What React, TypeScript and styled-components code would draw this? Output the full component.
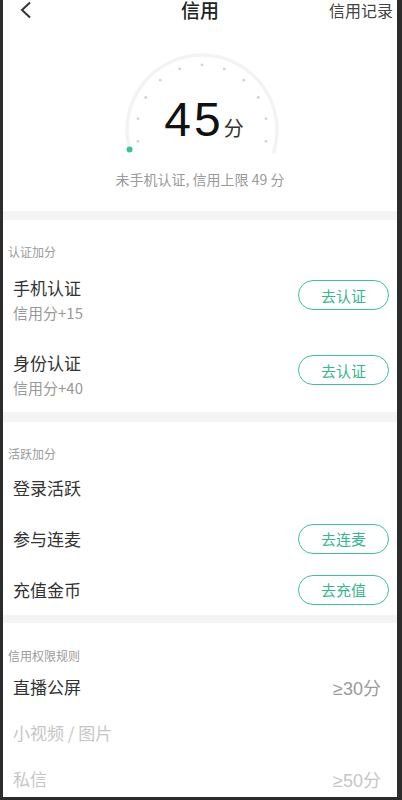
import styled, { createGlobalStyle } from 'styled-components'

const GlobalStyle = createGlobalStyle`
  html, body {
    margin: 0;
    padding: 0;
    background: #2c2c2c;
  }
  body {
    font-family: "Noto Sans CJK SC", "Noto Sans", sans-serif;
    color: #333;
  }
`

const GREEN = '#3cc29a'

const ticks = [90, 110, 130, 150, 170, 190, 70, 50, 30, 10, -10]

const Gauge = () => {
  const cx = 85
  const cy = 80
  const r = 75
  const rad = (d: number) => (d * Math.PI) / 180
  const pt = (deg: number, rr: number) => [cx + rr * Math.cos(rad(deg)), cy - rr * Math.sin(rad(deg))]
  const [sx, sy] = pt(195, r)
  const [ex, ey] = pt(-17, r)
  return (
    <GaugeSvg viewBox="0 0 170 110" width="170" height="110">
      <path
        d={`M ${sx} ${sy} A ${r} ${r} 0 1 1 ${ex} ${ey}`}
        fill="none"
        stroke="#f3f3f3"
        strokeWidth="3.5"
        strokeLinecap="round"
      />
      {ticks.map((t) => {
        const [x, y] = pt(t, 65)
        return <circle key={t} cx={x} cy={y} r="1.4" fill="#d4d4d4" />
      })}
      <circle cx={sx} cy={sy} r="3" fill={GREEN} />
    </GaugeSvg>
  )
}

type ActionRow = { title: string; sub?: string; action?: string }

const certRows: ActionRow[] = [
  { title: '手机认证', sub: '信用分+15', action: '去认证' },
  { title: '身份认证', sub: '信用分+40', action: '去认证' },
]

const activeRows: ActionRow[] = [
  { title: '登录活跃' },
  { title: '参与连麦', action: '去连麦' },
  { title: '充值金币', action: '去充值' },
]

const rules = [
  { title: '直播公屏', value: '≥30分', dim: false },
  { title: '小视频 / 图片', value: '', dim: true },
  { title: '私信', value: '≥50分', dim: true },
]

const App = () => {
  return (
    <>
      <GlobalStyle />
      <Screen>
        <Header>
          <BackButton>
            <svg width="14" height="18" viewBox="0 0 14 18">
              <path d="M11 1.5 L3 9 L11 16.5" fill="none" stroke="#333" strokeWidth="2" />
            </svg>
          </BackButton>
          <Title>信用</Title>
          <HeaderLink>信用记录</HeaderLink>
        </Header>

        <ScoreSection>
          <GaugeWrap>
            <Gauge />
            <ScoreLine>
              <ScoreNum>45</ScoreNum>
              <ScoreUnit>分</ScoreUnit>
            </ScoreLine>
          </GaugeWrap>
          <ScoreNote>未手机认证, 信用上限 49 分</ScoreNote>
        </ScoreSection>

        <Divider />

        <CertSection>
          <SectionTitle>认证加分</SectionTitle>
          {certRows.map((r) => (
            <CertRow key={r.title}>
              <Info>
                <ItemTitle>{r.title}</ItemTitle>
                <ItemSub>{r.sub}</ItemSub>
              </Info>
              <GoButton>{r.action}</GoButton>
            </CertRow>
          ))}
        </CertSection>

        <Divider $h={10} />

        <ActiveSection>
          <SectionTitle>活跃加分</SectionTitle>
          {activeRows.map((r) => (
            <ActiveRow key={r.title}>
              <ItemTitle>{r.title}</ItemTitle>
              {r.action && <GoButton $flat>{r.action}</GoButton>}
            </ActiveRow>
          ))}
        </ActiveSection>

        <Divider $h={8} />

        <RuleSection>
          <SectionTitle>信用权限规则</SectionTitle>
          {rules.map((r) => (
            <RuleRow key={r.title} $dim={r.dim}>
              <ItemTitle>{r.title}</ItemTitle>
              <RuleValue $dim={r.dim}>{r.value}</RuleValue>
            </RuleRow>
          ))}
        </RuleSection>
      </Screen>
    </>
  )
}

export default App

const Screen = styled.div`
  margin: 0 5px 0 3px;
  height: 797px;
  overflow: hidden;
  background: #fff;
`

const Header = styled.div`
  height: 20px;
  display: grid;
  grid-template-columns: 1fr auto 1fr;
  align-items: center;
`

const BackButton = styled.div`
  display: flex;
  align-items: center;
  padding-left: 16px;
`

const Title = styled.div`
  font-size: 19px;
  font-weight: 500;
  color: #222;
  line-height: 20px;
`

const HeaderLink = styled.div`
  justify-self: end;
  font-size: 16px;
  color: #444;
  line-height: 20px;
  padding-right: 4px;
`

const ScoreSection = styled.div`
  display: flex;
  flex-direction: column;
  align-items: center;
  padding: 30px 0 23px;
`

const GaugeWrap = styled.div`
  position: relative;
  width: 170px;
  height: 110px;
  margin-left: 4px;
`

const GaugeSvg = styled.svg`
  display: block;
`

const ScoreLine = styled.div`
  position: absolute;
  top: 46px;
  left: 0;
  right: 0;
  display: flex;
  justify-content: center;
  align-items: baseline;
  padding-left: 4px;
`

const ScoreNum = styled.span`
  font-family: "Liberation Sans", Arial, sans-serif;
  font-size: 48px;
  line-height: 48px;
  letter-spacing: 3px;
  color: #111;
`

const ScoreUnit = styled.span`
  font-size: 20px;
  color: #333;
`

const ScoreNote = styled.div`
  margin-top: 10px;
  font-size: 14px;
  line-height: 18px;
  color: #9a9a9a;
`

const Divider = styled.div<{ $h?: number }>`
  height: ${(p) => p.$h ?? 9}px;
  background: #f4f4f4;
`

const SectionTitle = styled.div`
  font-size: 12px;
  line-height: 16px;
  color: #9b9b9b;
  padding-left: 5px;
`

const CertSection = styled.div`
  padding: 24px 0 14px;
`

const CertRow = styled.div`
  display: flex;
  justify-content: space-between;
  align-items: flex-start;
  padding: 0 8px 0 10px;
  margin-top: 17px;

  & + & {
    margin-top: 29px;
  }
`

const Info = styled.div`
  display: flex;
  flex-direction: column;
`

const ItemTitle = styled.div`
  font-size: 17px;
  line-height: 22px;
`

const ItemSub = styled.div`
  margin-top: 4px;
  font-size: 15px;
  line-height: 20px;
  color: #999;
`

const GoButton = styled.button<{ $flat?: boolean }>`
  width: 91px;
  height: 30px;
  margin-top: ${(p) => (p.$flat ? 0 : 3)}px;
  border: 1.5px solid ${GREEN};
  border-radius: 15px;
  background: #fff;
  color: #34b78e;
  font-family: inherit;
  font-size: 15px;
  padding: 0;
`

const ActiveSection = styled.div`
  padding-top: 24px;
`

const ActiveRow = styled.div`
  height: 51px;
  display: flex;
  justify-content: space-between;
  align-items: center;
  padding: 0 8px 0 10px;
  color: #333;

  &:first-of-type {
    margin-top: 1px;
  }
`

const RuleSection = styled.div`
  padding-top: 25px;
`

const RuleRow = styled.div<{ $dim: boolean }>`
  height: 46px;
  display: flex;
  justify-content: space-between;
  align-items: center;
  padding: 0 16px 0 10px;
  color: ${(p) => (p.$dim ? '#c6c6c6' : '#333')};

  &:first-of-type {
    margin-top: 4px;
  }
`

const RuleValue = styled.div<{ $dim: boolean }>`
  font-family: "Liberation Sans", "Noto Sans CJK SC", sans-serif;
  font-size: 18px;
  color: ${(p) => (p.$dim ? '#c6c6c6' : '#9a9a9a')};
`
